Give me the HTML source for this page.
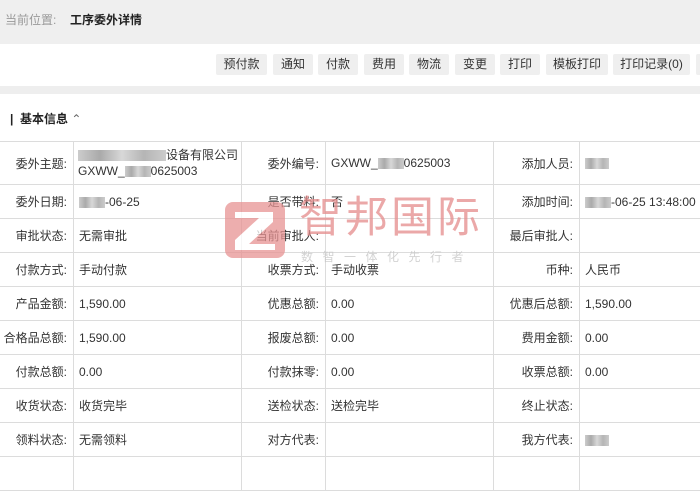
<!DOCTYPE html>
<html><head><meta charset="utf-8"><style>
*{margin:0;padding:0;box-sizing:border-box}
body{width:700px;height:466px;overflow:hidden;background:#fff;font-family:"Liberation Sans","Noto Sans CJK SC",sans-serif;font-size:12px;color:#333;position:relative}
.hdr{position:absolute;left:0;top:0;width:700px;height:44px;background:#efefef}
.hdr span{position:absolute;top:11px;font-size:12px}
.bar{position:absolute;top:54px;height:21px;background:#efefef;border-radius:2px;text-align:center;line-height:21px;font-size:12px;color:#333}
.gap{position:absolute;left:0;top:86px;width:700px;height:8px;background:#eeeeee}
.sec{position:absolute;left:10px;top:110px;font-weight:bold;font-size:12px;color:#222}
table{position:absolute;left:-1px;top:141px;border-collapse:collapse;table-layout:fixed;width:790px}
td{border:1px solid #dcdcdc;height:34px;padding:0 5px;font-size:12px;color:#333;vertical-align:middle;white-space:nowrap;overflow:hidden}
td.l{text-align:right;padding-right:6px;padding-left:0}
.blur{display:inline-block;height:11px;background:linear-gradient(90deg,#ccc,#aaa,#d8d8d8,#b5b5b5,#ccc);vertical-align:middle}
.wm{position:absolute;left:225px;top:202px;width:60px;height:56px;background:#e79393;border-radius:8px;opacity:.75}
.wmt{position:absolute;left:299px;top:192px;font-size:43px;color:#e58c8c;letter-spacing:3px;line-height:52px;opacity:.75}
.wms{position:absolute;left:301px;top:248px;font-size:12px;color:#c8c8c8;letter-spacing:9.5px;opacity:.8}
</style></head><body>
<div class="hdr"><span style="left:5px;color:#999">当前位置:</span><span style="left:70px;font-weight:bold;color:#222">工序委外详情</span></div>
<div class="bar" style="left:216px;width:51px">预付款</div>
<div class="bar" style="left:273px;width:40px">通知</div>
<div class="bar" style="left:318px;width:40px">付款</div>
<div class="bar" style="left:364px;width:40px">费用</div>
<div class="bar" style="left:409px;width:40px">物流</div>
<div class="bar" style="left:455px;width:40px">变更</div>
<div class="bar" style="left:500px;width:40px">打印</div>
<div class="bar" style="left:546px;width:62px">模板打印</div>
<div class="bar" style="left:613px;width:77px">打印记录(0)</div>
<div class="bar" style="left:696px;width:20px"></div>
<div class="gap"></div>
<div class="sec">|&nbsp; 基本信息 <span style="font-weight:normal;color:#666">&#8963;</span></div>
<table>
<colgroup><col style="width:74px"><col style="width:168px"><col style="width:84px"><col style="width:168px"><col style="width:86px"><col style="width:210px"></colgroup>
<tr style="height:43px"><td class="l" style="height:43px">委外主题:</td><td style="line-height:16px;padding-left:4px"><span class="blur" style="width:88px"></span>设备有限公司<br>GXWW_<span class="blur" style="width:26px"></span>0625003</td><td class="l">委外编号:</td><td>GXWW_<span class="blur" style="width:26px"></span>0625003</td><td class="l">添加人员:</td><td><span class="blur" style="width:24px"></span></td></tr>
<tr><td class="l">委外日期:</td><td><span class="blur" style="width:26px"></span>-06-25</td><td class="l">是否带料:</td><td>否</td><td class="l">添加时间:</td><td><span class="blur" style="width:26px"></span>-06-25 13:48:00</td></tr>
<tr><td class="l">审批状态:</td><td>无需审批</td><td class="l">当前审批人:</td><td></td><td class="l">最后审批人:</td><td></td></tr>
<tr><td class="l">付款方式:</td><td>手动付款</td><td class="l">收票方式:</td><td>手动收票</td><td class="l">币种:</td><td>人民币</td></tr>
<tr><td class="l">产品金额:</td><td>1,590.00</td><td class="l">优惠总额:</td><td>0.00</td><td class="l">优惠后总额:</td><td>1,590.00</td></tr>
<tr><td class="l">合格品总额:</td><td>1,590.00</td><td class="l">报废总额:</td><td>0.00</td><td class="l">费用金额:</td><td>0.00</td></tr>
<tr><td class="l">付款总额:</td><td>0.00</td><td class="l">付款抹零:</td><td>0.00</td><td class="l">收票总额:</td><td>0.00</td></tr>
<tr><td class="l">收货状态:</td><td>收货完毕</td><td class="l">送检状态:</td><td>送检完毕</td><td class="l">终止状态:</td><td></td></tr>
<tr><td class="l">领料状态:</td><td>无需领料</td><td class="l">对方代表:</td><td></td><td class="l">我方代表:</td><td><span class="blur" style="width:24px"></span></td></tr>
<tr><td></td><td></td><td></td><td></td><td></td><td></td></tr>
</table>
<div class="wm"><svg width="60" height="56" viewBox="0 0 60 56"><path d="M10 10H48V20L24 42H50V48H10V38L34 16H10Z" fill="#fff"/></svg></div>
<div class="wmt">智邦国际</div>
<div class="wms">数智一体化先行者</div>
</body></html>
